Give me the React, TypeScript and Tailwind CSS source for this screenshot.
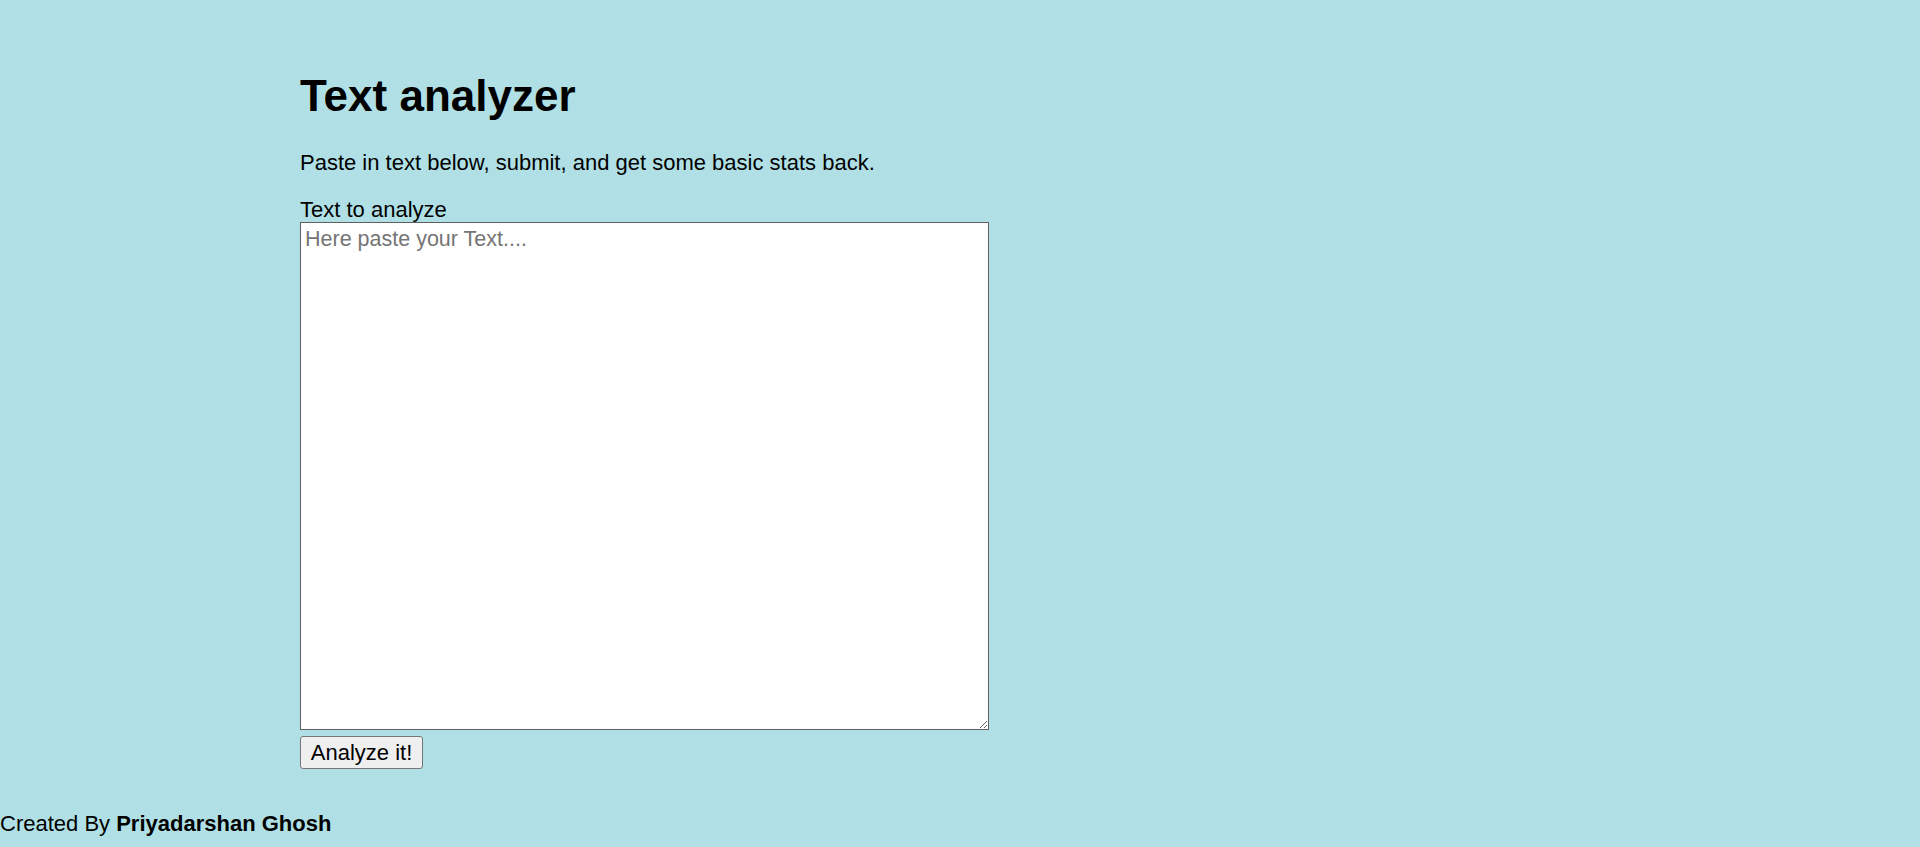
import React from 'react';

const App = () => {
  return (
    <div className="min-h-[847px] bg-[#b0e0e6] font-['Liberation_Sans',Arial,sans-serif] text-black">
      <main className="pl-[300px] pt-[70px]">
        <h1 className="text-[44px] leading-[52px] font-bold">Text analyzer</h1>
        <p className="mt-[29px] text-[22px] leading-[24px]">
          Paste in text below, submit, and get some basic stats back.
        </p>
        <form className="mt-[23px] flex flex-col items-start" onSubmit={(e) => e.preventDefault()}>
          <label htmlFor="text" className="text-[22px] leading-[24px]">
            Text to analyze
          </label>
          <textarea
            id="text"
            placeholder="Here paste your Text...."
            className="w-[689px] h-[508px] bg-white border border-[#5f5f5f] px-[4px] py-[4px] text-[21.5px] leading-[24px] placeholder:text-[#757575] outline-none resize"
          />
          <button
            type="submit"
            className="mt-[6px] w-[123px] h-[33px] bg-[#efefef] border border-[#767676] rounded-[3px] text-[22px] leading-[24px] text-black"
          >
            Analyze it!
          </button>
        </form>
      </main>
      <footer className="mt-[43px] text-[22px] leading-[24px]">
        Created By <b className="font-bold">Priyadarshan Ghosh</b>
      </footer>
    </div>
  );
};

export default App;
